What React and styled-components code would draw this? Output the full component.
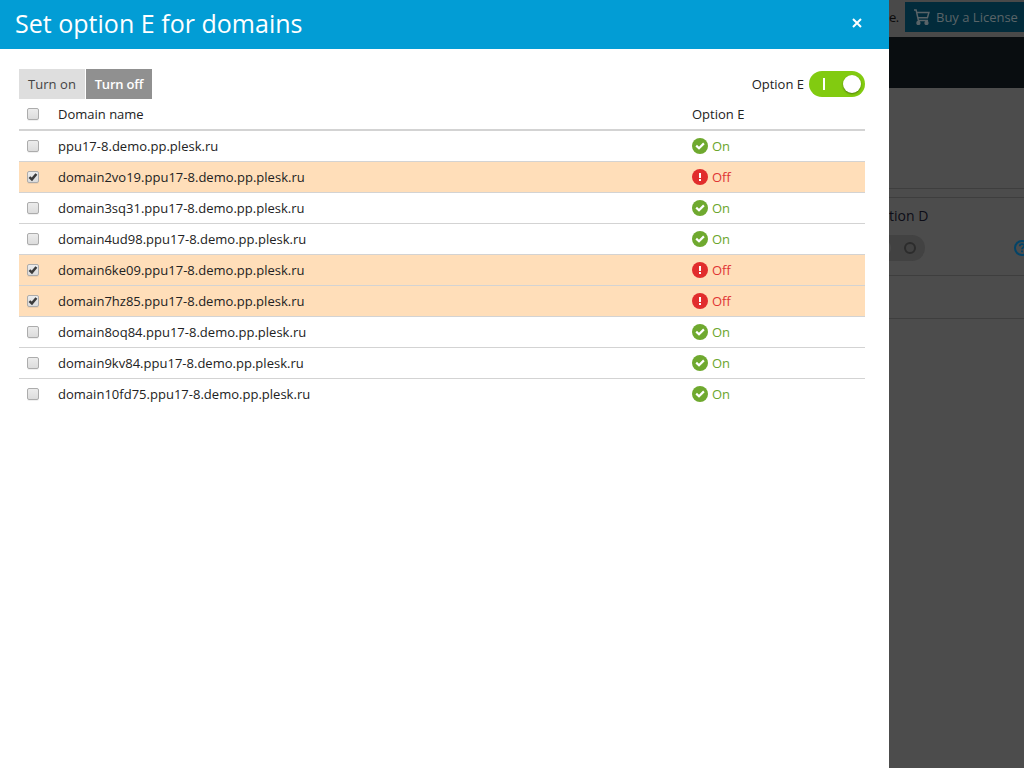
import React from 'react';
import styled, { createGlobalStyle } from 'styled-components';

const GlobalStyle = createGlobalStyle`
  * { box-sizing: border-box; }
  body { margin: 0; font: 13px/18px "Open Sans", "Liberation Sans", sans-serif; color: #222; }
`;

const Screen = styled.div`
  display: flex;
  height: 768px;
  overflow: hidden;
`;
const Drawer = styled.section`
  width: 889px;
  flex: none;
  background: #fff;
`;
const DrawerHeader = styled.header`
  display: flex;
  align-items: center;
  justify-content: space-between;
  height: 49px;
  padding: 0 27px 3px 15px;
  background: #029dd5;
  color: #fff;
`;
const Title = styled.h1`
  margin: 0;
  font-size: 25px;
  line-height: 34px;
  font-weight: 400;
  letter-spacing: 0.02px;
`;
const CloseButton = styled.button`
  display: flex;
  padding: 0;
  border: 0;
  background: none;
`;
const Content = styled.div`
  padding: 20px 24px 0 19px;
`;
const Toolbar = styled.div`
  display: flex;
  justify-content: space-between;
  height: 30px;
`;
const ButtonGroup = styled.div`
  display: flex;
  gap: 1px;
`;
const ToolButton = styled.button`
  width: 66px;
  height: 30px;
  padding: 0;
  border: 0;
  font: inherit;
  white-space: nowrap;
  font-weight: ${(p) => (p.$active ? 600 : 400)};
  letter-spacing: ${(p) => (p.$active ? '-0.2px' : '0.05px')};
  background: ${(p) => (p.$active ? '#909090' : '#dedede')};
  color: ${(p) => (p.$active ? '#fff' : '#444')};
`;
const SwitchLabel = styled.label`
  display: flex;
  align-items: center;
  gap: 5px;
`;
const Switch = styled.span`
  display: flex;
  align-items: center;
  justify-content: space-between;
  width: 56px;
  height: 26px;
  padding: 0 4px 0 14px;
  border-radius: 13px;
  background: #82cb10;
`;
const SwitchMark = styled.span`
  width: 2px;
  height: 12px;
  background: #fff;
`;
const SwitchKnob = styled.span`
  width: 18px;
  height: 18px;
  border-radius: 50%;
  background: #fff;
  box-shadow: 0 1px 2px rgba(0, 0, 0, 0.4);
`;
const Row = styled.div`
  display: grid;
  grid-template-columns: 39px 634px 1fr;
  align-items: center;
  height: 31px;
  border-bottom: 1px solid #d3d3d3;
  background: ${(p) => (p.$selected ? '#ffdeb9' : '#fff')};
  &:last-child { border-bottom-color: transparent; }
`;
const HeadRow = styled(Row)`
  height: 32px;
  border-bottom-width: 2px;
`;
const Name = styled.span`
  letter-spacing: 0.015px;
`;
const CheckBox = styled.span`
  display: flex;
  width: 12px;
  height: 12px;
  margin-left: 8px;
  border: 1px solid #acacac;
  border-radius: 2px;
  background: linear-gradient(#ececec, #dcdcdc);
  box-shadow: 0 1px 0 rgba(0, 0, 0, 0.06);
`;
const Status = styled.span`
  display: flex;
  align-items: center;
  gap: 4px;
  color: ${(p) => (p.$on ? '#6ba52c' : '#e03434')};
`;

const Backdrop = styled.aside`
  flex: 1;
  min-width: 0;
  overflow: hidden;
  background: #4c4c4c;
  color: #0b0b0b;
`;
const TopStrip = styled.div`
  display: flex;
  align-items: flex-start;
  justify-content: space-between;
  height: 37px;
  padding-top: 2px;
  background: #494949;
`;
const Notice = styled.span`
  line-height: 30px;
  letter-spacing: -0.6px;
`;
const BuyButton = styled.div`
  display: flex;
  align-items: center;
  gap: 6px;
  width: 119px;
  height: 30px;
  padding-left: 9px;
  background: #022b3b;
  color: #5a6468;
  white-space: nowrap;
`;
const DarkBar = styled.div`
  height: 51px;
  background: #090d10;
`;
const Blank = styled.div`
  height: ${(p) => p.$h}px;
  border-bottom: 1px solid #3e3e3e;
`;
const OptionCard = styled.div`
  height: 78px;
  padding-top: 8px;
  border-bottom: 1px solid #3e3e3e;
`;
const OptionName = styled.div`
  font-size: 14px;
  line-height: 19px;
  color: #0d0d17;
`;
const OptionControls = styled.div`
  display: flex;
  align-items: center;
  justify-content: space-between;
  width: 142px;
  height: 26px;
  margin-top: 10px;
`;
const DimSwitch = styled.div`
  display: flex;
  align-items: center;
  justify-content: space-between;
  width: 56px;
  height: 26px;
  margin-left: -20px;
  padding: 0 9px 0 4px;
  border-radius: 13px;
  background: #424242;
`;
const DimKnob = styled.span`
  width: 18px;
  height: 18px;
  border-radius: 50%;
  background: #4c4c4c;
`;
const DimRing = styled.span`
  width: 12px;
  height: 12px;
  border: 2px solid #2c2c2c;
  border-radius: 50%;
`;

function Check({ checked }) {
  return (
    <CheckBox>
      {checked && (
        <svg width="10" height="10" viewBox="0 0 10 10">
          <path d="M1.4 5.1 3.9 7.4 8.4 2" fill="none" stroke="#3b3b3b" strokeWidth="2.5" />
        </svg>
      )}
    </CheckBox>
  );
}

function StatusIcon({ on }) {
  return (
    <svg width="16" height="16" viewBox="0 0 16 16">
      <circle cx="8" cy="8" r="8" fill={on ? '#6fa92f' : '#e12d2d'} />
      {on ? (
        <path d="M4.2 7.6 7 10.2 11.9 5.4" fill="none" stroke="#fff" strokeWidth="2.2" />
      ) : (
        <path d="M7 4h2v5H7zM7 10h2v2H7z" fill="#fff" />
      )}
    </svg>
  );
}

const CartIcon = () => (
  <svg width="16" height="16" viewBox="0 0 16 16" fill="none" stroke="#5a6468" strokeWidth="1.5">
    <path d="M0 .9h2.1L4.4 11.4H14M2.8 3.6h12.1l-1.5 5.2H4" />
    <circle cx="4.4" cy="14" r="1.4" fill="#5a6468" />
    <circle cx="12.5" cy="14" r="1.4" fill="#5a6468" />
  </svg>
);

const HelpIcon = () => (
  <svg width="17" height="16" viewBox="0 0 17 16" fill="none" stroke="#034468" strokeWidth="2">
    <circle cx="8" cy="8" r="7" />
    <path d="M5.7 6.3C5.9 3.5 10.5 3.5 10.3 6.1 10.2 7.5 8 7.4 8 9.2M8 10.5v1.8" strokeWidth="1.8" />
  </svg>
);

const domains = [
  ['ppu17-8.demo.pp.plesk.ru', true],
  ['domain2vo19.ppu17-8.demo.pp.plesk.ru', false],
  ['domain3sq31.ppu17-8.demo.pp.plesk.ru', true],
  ['domain4ud98.ppu17-8.demo.pp.plesk.ru', true],
  ['domain6ke09.ppu17-8.demo.pp.plesk.ru', false],
  ['domain7hz85.ppu17-8.demo.pp.plesk.ru', false],
  ['domain8oq84.ppu17-8.demo.pp.plesk.ru', true],
  ['domain9kv84.ppu17-8.demo.pp.plesk.ru', true],
  ['domain10fd75.ppu17-8.demo.pp.plesk.ru', true],
];

export default function App() {
  return (
    <Screen>
      <GlobalStyle />
      <Drawer>
        <DrawerHeader>
          <Title>Set option E for domains</Title>
          <CloseButton aria-label="Close">
            <svg width="10" height="10" viewBox="0 0 10 10">
              <path d="M1 1l8 8M9 1L1 9" stroke="#fff" strokeWidth="2" />
            </svg>
          </CloseButton>
        </DrawerHeader>
        <Content>
          <Toolbar>
            <ButtonGroup>
              <ToolButton>Turn on</ToolButton>
              <ToolButton $active>Turn off</ToolButton>
            </ButtonGroup>
            <SwitchLabel>
              Option E
              <Switch><SwitchMark /><SwitchKnob /></Switch>
            </SwitchLabel>
          </Toolbar>
          <HeadRow>
            <Check />
            <span>Domain name</span>
            <span>Option E</span>
          </HeadRow>
          {domains.map(([name, on]) => (
            <Row key={name} $selected={!on}>
              <Check checked={!on} />
              <Name>{name}</Name>
              <Status $on={on}><StatusIcon on={on} />{on ? 'On' : 'Off'}</Status>
            </Row>
          ))}
        </Content>
      </Drawer>
      <Backdrop>
        <TopStrip>
          <Notice>e.</Notice>
          <BuyButton><CartIcon />Buy a License</BuyButton>
        </TopStrip>
        <DarkBar />
        <Blank $h={101} />
        <Blank $h={9} />
        <OptionCard>
          <OptionName>tion D</OptionName>
          <OptionControls>
            <DimSwitch><DimKnob /><DimRing /></DimSwitch>
            <HelpIcon />
          </OptionControls>
        </OptionCard>
        <Blank $h={43} />
      </Backdrop>
    </Screen>
  );
}
